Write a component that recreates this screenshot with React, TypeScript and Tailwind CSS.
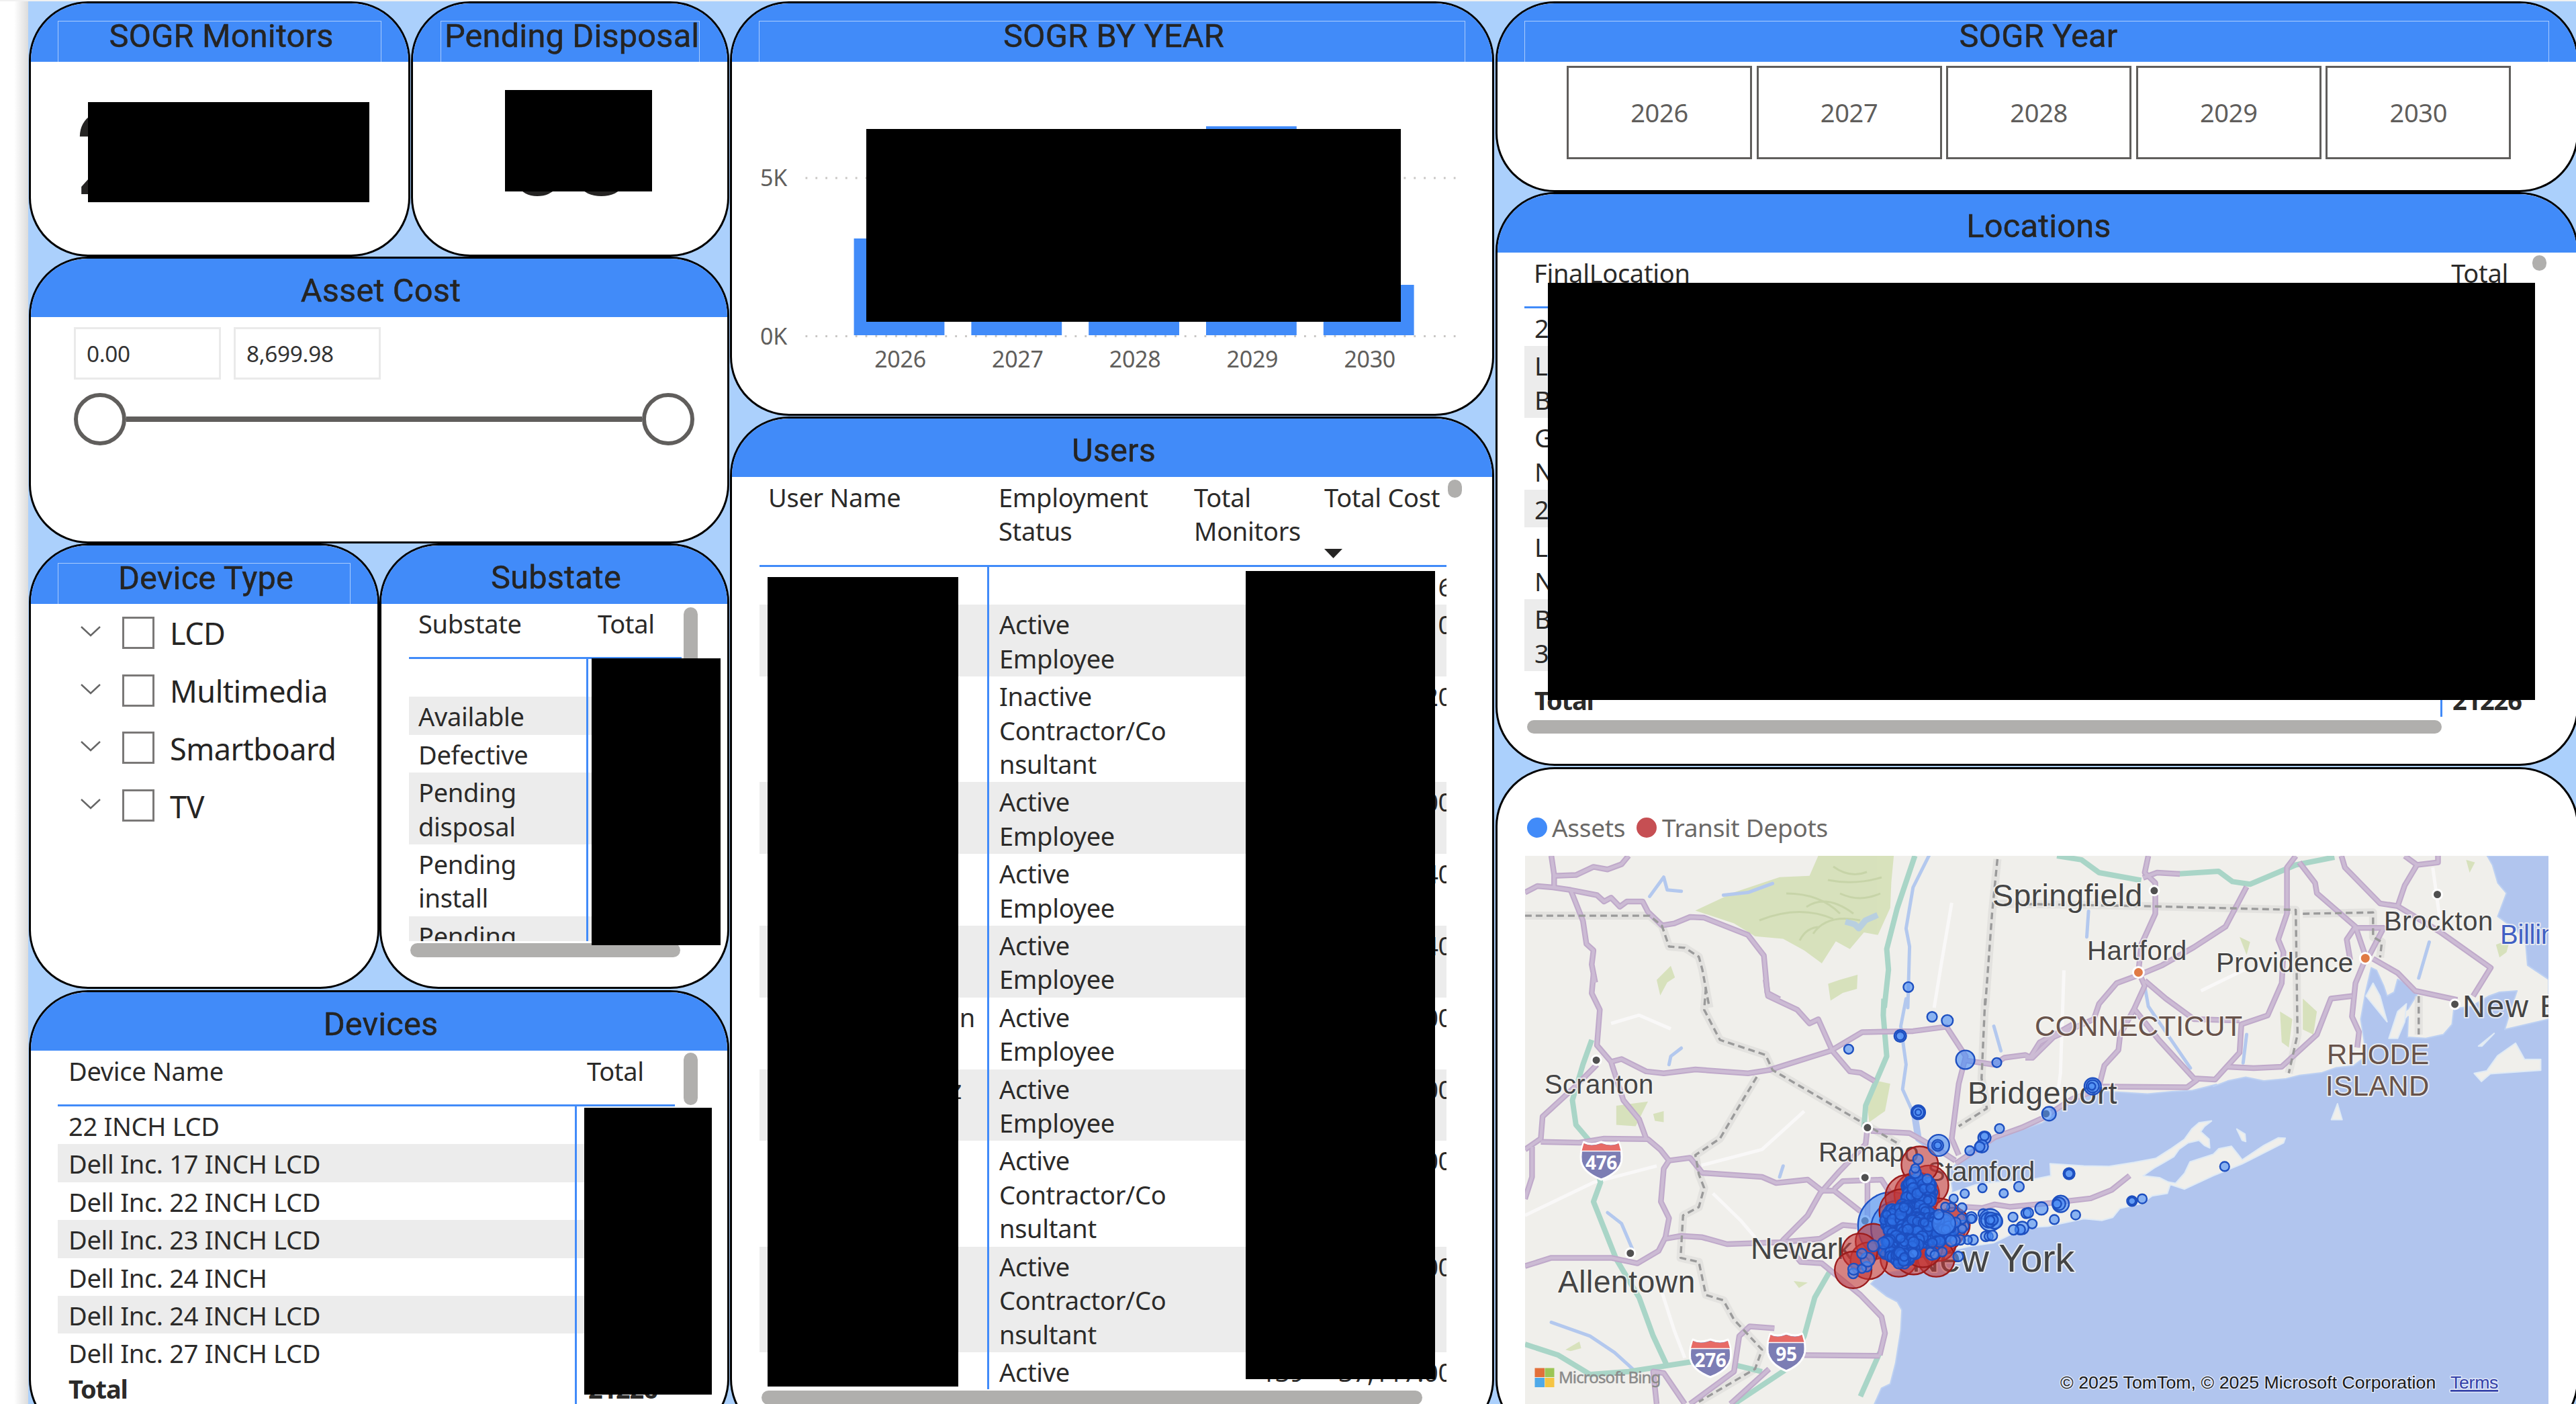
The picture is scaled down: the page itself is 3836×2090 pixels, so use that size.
import type { ReactNode } from 'react'

/* ---------- shared pieces ---------- */

function Panel({ className = '', title, outlined = false, outline = '', children }: {
  className?: string
  title?: string
  outlined?: boolean
  outline?: string
  children?: ReactNode
}) {
  return (
    <section className={`relative shrink-0 overflow-hidden rounded-[88px] border-[3px] border-black bg-white ${className}`}>
      {title && (
        <header className="h-[87px] bg-[#418bf9] pt-[26px]">
          <h2
            className={`h-[61px] whitespace-nowrap pl-[5px] text-center font-['Roboto'] text-[48.7px] leading-[44px] tracking-[0.2px] text-[#252423] [-webkit-text-stroke:0.5px_#252423] ${
              outlined ? 'border-x border-t border-white/55' : ''
            } ${outline}`}
          >
            {title}
          </h2>
        </header>
      )}
      {children}
    </section>
  )
}

function Redaction({ className }: { className: string }) {
  return <div className={`absolute bg-black ${className}`} />
}

function Thumb({ className }: { className: string }) {
  return <div className={`absolute rounded-full bg-[#b0afad] ${className}`} />
}

/* ---------- left column ---------- */

function AssetCost() {
  return (
    <Panel title="Asset Cost" className="h-[427px]">
      <div className="flex gap-[19px] pl-[64px] pt-[15px]">
        {['0.00', '8,699.98'].map((v) => (
          <div key={v} className="flex h-[78px] w-[219px] items-center border-[3px] border-[#eaeaea] pl-[16px] pt-[1px] text-[33.3px] text-[#333]">
            {v}
          </div>
        ))}
      </div>
      <div className="ml-[64px] mt-[20px] flex w-[924px] items-center">
        <div className="h-[78px] w-[78px] rounded-full border-[6px] border-[#605e5c]" />
        <div className="h-[8px] flex-1 bg-[#605e5c]" />
        <div className="h-[78px] w-[78px] rounded-full border-[6px] border-[#605e5c]" />
      </div>
    </Panel>
  )
}

function DeviceType() {
  return (
    <Panel title="Device Type" outlined outline="ml-[40px] mr-[40px]" className="w-[522px]">
      <ul>
        {['LCD', 'Multimedia', 'Smartboard', 'TV'].map((d) => (
          <li key={d} className="flex h-[85.8px] items-center pl-[74px]">
            <svg className="-mt-[4px] h-[18px] w-[30px]" viewBox="0 0 30 18" fill="none">
              <path d="M1 2 L15 15 L29 2" stroke="#666" strokeWidth="2.4" />
            </svg>
            <span className="ml-[32px] h-[48px] w-[48px] border-[3px] border-[#7a7877]" />
            <span className="ml-[23px] pt-[2px] text-[45px] tracking-[-0.5px] text-[#252423]">{d}</span>
          </li>
        ))}
      </ul>
    </Panel>
  )
}

const substates = [[''], ['Available'], ['Defective'], ['Pending', 'disposal'], ['Pending', 'install'], ['Pending']]

function Substate() {
  return (
    <Panel title="Substate" className="w-[521px]">
      <div className="ml-[41px] h-[502px] w-[406px] overflow-hidden">
        <div className="flex h-[82px] border-b-[3px] border-[#418bf9] pl-[14px] pt-[4px] leading-[50.4px]">
          <span className="w-[267px]">Substate</span>
          <span>Total</span>
        </div>
        {substates.map((lines, i) => (
          <div key={i} className={`flex ${i % 2 ? 'bg-[#ececec]' : ''}`}>
            <div className="min-h-[56.4px] w-[267px] border-r-[3px] border-[#418bf9] pb-[2px] pl-[14px] pt-[4px] leading-[50.4px]">
              {lines.map((l) => <div key={l}>{l}</div>)}
            </div>
          </div>
        ))}
      </div>
      <Thumb className="left-[450px] top-[92px] h-[120px] w-[21px]" />
      <Thumb className="left-[43px] top-[592px] h-[21px] w-[402px]" />
      <Redaction className="left-[313px] top-[168px] h-[427px] w-[192px]" />
    </Panel>
  )
}

const devices = ['22 INCH LCD', 'Dell Inc. 17 INCH LCD', 'Dell Inc. 22 INCH LCD', 'Dell Inc. 23 INCH LCD', 'Dell Inc. 24 INCH', 'Dell Inc. 24 INCH LCD', 'Dell Inc. 27 INCH LCD']

function Devices() {
  return (
    <Panel title="Devices" className="h-[667px]">
      <div className="ml-[40px]">
        <div className="flex h-[83px] w-[919px] border-b-[3px] border-[#418bf9] pl-[16px] pt-[5px] leading-[50.4px]">
          <span className="w-[772px]">Device Name</span>
          <span>Total</span>
        </div>
        {devices.map((d, i) => (
          <div key={i} className={`flex h-[56.4px] w-[919px] ${i % 2 ? 'bg-[#ececec]' : ''}`}>
            <div className="w-[773px] border-r-[3px] border-[#418bf9] pl-[16px] pt-[4px] leading-[50.4px]">{d}</div>
          </div>
        ))}
        <div className="flex h-[90px] w-[919px] font-bold tracking-[-1.2px]">
          <div className="w-[773px] border-r-[3px] border-[#418bf9] pl-[16px] leading-[50.4px]">Total</div>
          <div className="pl-[17px] leading-[50.4px]">21226</div>
        </div>
      </div>
      <Thumb className="left-[972px] top-[90px] h-[78px] w-[21px]" />
      <Redaction className="left-[824px] top-[172px] h-[427px] w-[190px]" />
    </Panel>
  )
}

/* ---------- middle column ---------- */

const bars = [
  { year: '2026', top: 355 },
  { year: '2027', top: 400 },
  { year: '2028', top: 400 },
  { year: '2029', top: 188 },
  { year: '2030', top: 424 },
]

function SogrByYear() {
  return (
    <Panel title="SOGR BY YEAR" outlined outline="mx-[40px]" className="h-[617px]">
      <svg className="absolute left-0 top-[87px] h-[524px] w-[1132px]" viewBox="1090 92 1132 524">
        {[265, 500.5].map((y) => (
          <line key={y} x1="1199.5" x2="2168" y1={y} y2={y} stroke="#c8c6c4" strokeWidth="3" strokeDasharray="2.8 12.05" />
        ))}
        {bars.map((b, i) => (
          <rect key={b.year} x={1271.6 + i * 174.8} y={b.top} width="134.8" height={499 - b.top} fill="#418bf9" />
        ))}
        <g fill="#605e5c" fontSize="34" fontFamily="Noto Sans, sans-serif" letterSpacing="-0.3">
          <text x="1172" y="277" textAnchor="end">5K</text>
          <text x="1172" y="512.5" textAnchor="end">0K</text>
          {bars.map((b, i) => (
            <text key={b.year} x={1340.5 + i * 174.8} y="547" textAnchor="middle">{b.year}</text>
          ))}
        </g>
      </svg>
      <Redaction className="left-[200px] top-[187px] h-[287px] w-[796px]" />
    </Panel>
  )
}

type User = { name?: string; pad?: string; status: string[]; count?: string; cost: string }
const contractor = ['Active', 'Contractor/Co', 'nsultant']
const employee = ['Active', 'Employee']
const users: User[] = [
  { status: [''], cost: '6' },
  { status: employee, cost: '0' },
  { status: ['Inactive', 'Contractor/Co', 'nsultant'], cost: '20' },
  { status: employee, cost: '00' },
  { status: employee, cost: '40' },
  { status: employee, cost: '40' },
  { name: 'n', pad: 'pr-[18px]', status: employee, cost: '00' },
  { name: 'z', pad: 'pr-[38px]', status: employee, cost: '00' },
  { status: contractor, cost: '00' },
  { status: contractor, cost: '00' },
  { status: ['Active', ''], count: '139', cost: '37,117.00' },
]

function Users() {
  return (
    <Panel title="Users" className="h-[1521px]">
      <div className="ml-[41px] h-[1358px] w-[1023px] overflow-hidden leading-[50.4px]">
        <div className="flex h-[134px] border-b-[3px] border-[#418bf9] pt-[5px]">
          <div className="w-[342px] pl-[13px]">User Name</div>
          <div className="w-[291px] pl-[14px]">Employment<br />Status</div>
          <div className="w-[194px] pl-[14px]">Total<br />Monitors</div>
          <div className="w-[196px] whitespace-nowrap pl-[14px]">
            Total Cost
            <svg className="mt-[52px] h-[14px] w-[27px]" viewBox="0 0 27 14"><path d="M0 0H27L13.5 14Z" fill="#252423" /></svg>
          </div>
        </div>
        {users.map((u, i) => (
          <div key={i} className={`flex ${i % 2 ? 'bg-[#ececec]' : ''}`}>
            <div className={`w-[342px] border-r-[3px] border-[#418bf9] pt-[4px] text-right ${u.pad ?? ''}`}>{u.name}</div>
            <div className="min-h-[56.4px] w-[291px] pb-[2px] pl-[15px] pt-[4px]">
              {u.status.map((l) => <div key={l}>{l}</div>)}
            </div>
            <div className="w-[194px] pr-[16px] pt-[4px] text-right">{u.count}</div>
            <div className="flex w-[196px] justify-end overflow-hidden pt-[4px]">
              <span className="-mr-[9px]">{u.cost}</span>
            </div>
          </div>
        ))}
      </div>
      <Thumb className="left-[1066px] top-[91px] h-[27px] w-[21px]" />
      <Thumb className="left-[44px] top-[1447px] h-[21px] w-[984px]" />
      <Redaction className="left-[53px] top-[236px] h-[1205px] w-[284px]" />
      <Redaction className="left-[765px] top-[227px] h-[1203px] w-[282px]" />
    </Panel>
  )
}

/* ---------- right column ---------- */

function SogrYear() {
  return (
    <Panel title="SOGR Year" outlined outline="ml-[40px] mr-[41px]" className="h-[284px]">
      <div className="flex gap-[6.6px] pl-[103px] pt-[6px]">
        {['2026', '2027', '2028', '2029', '2030'].map((y) => (
          <div key={y} className="flex h-[139px] w-[276px] items-center justify-center border-[3px] border-[#605e5c] text-[#605e5c]">
            {y}
          </div>
        ))}
      </div>
    </Panel>
  )
}

const locations = [['2'], ['L', 'B'], ['G', 'N'], ['2'], ['L', 'N'], ['B', '3']]

function Locations() {
  return (
    <Panel title="Locations" className="h-[854px]">
      <div className="ml-[40px] leading-[50.4px]">
        <div className="flex h-[83px] w-[1490px] justify-between border-b-[3px] border-[#418bf9] pl-[14px] pr-[25px] pt-[5px]">
          <span>FinalLocation</span>
          <span>Total</span>
        </div>
        {locations.map((lines, i) => (
          <div key={i} className={`w-[60px] pb-[2px] pl-[15px] pt-[4px] ${i % 2 ? 'bg-[#ececec]' : ''}`}>
            {lines.map((l) => <div key={l}>{l}</div>)}
          </div>
        ))}
        <div className="flex h-[68px] w-[1490px] pt-[18px] font-bold tracking-[-1.2px]">
          <div className="w-[1367px] border-r-[3px] border-[#418bf9] pl-[15px]">Total</div>
          <div className="pl-[15px]">21226</div>
        </div>
      </div>
      <Thumb className="left-[1541px] top-[91px] h-[23px] w-[21px]" />
      <Thumb className="left-[44px] top-[783px] h-[20px] w-[1362px]" />
      <Redaction className="left-[75px] top-[132px] h-[621px] w-[1470px]" />
    </Panel>
  )
}

/* Survey sheets: every outline is noted in the units of its own sheet
   (origin x, origin y, units per pixel in x and y). */
type Sheet = [number, number, number, number]
const NW: Sheet = [2216, 900, 1.912, 2.613]
const NE: Sheet = [3016, 1100, 1.912, 2.613]
const SW: Sheet = [2216, 1450, 1.912, 2.45]
const NYC: Sheet = [2640, 1400, 2.24, 2.8]
const SE: Sheet = [2996, 1500, 1.8667, 2.6576]

function pt(s: Sheet, x: number, y: number): [number, number] {
  return [+(s[0] + x / s[2]).toFixed(1), +(s[1] + y / s[3]).toFixed(1)]
}
function line(s: Sheet, pts: string) {
  return pts.split(' ').map((p) => {
    const [x, y] = p.split(',').map(Number)
    return pt(s, x, y).join(',')
  }).join(' ')
}

const sea = [
  line(SW, '1100,1568 1120,1510 1145,1495 1160,1420 1175,1300 1178,1225 1165,1195 1135,1175 1090,1130 1115,1095 1180,1080 1250,1060'),
  line(NYC, '600,1240 590,1100 600,1040 590,960 620,920 650,880 700,840 760,805 830,790 900,760 960,705 1010,665 1060,628 1150,632 1250,640 1330,630 1400,625 1480,600'),
  line(SE, '560,312 600,290 650,275 700,290 760,282 800,268 860,258 900,238 950,230 985,190 978,120'),
  line(NE, '955,1090 968,990 985,890 1000,900 1020,960 1030,1000 1050,985 1060,935 1085,950 1115,995 1090,1050 1060,1080 1040,1160 1090,1080 1088,1160 1140,1165 1190,1150 1215,1110 1220,1050 1270,1040 1320,1000 1350,985 1400,980 1385,1040 1365,1130 1490,1090 1490,935 1430,880 1425,800 1400,745 1345,690 1370,600 1345,560 1330,490 1315,455'),
  '3796,1274 3796,2092 2800,2092',
].join(' ')

const islands = [
  line(SE, '-231,949 -260,860 -230,760 -164,731 -100,700 -40,690 44,683 108,665 106,617 200,626 270,628 340,612 400,596 440,560 480,520 500,480 520,455 555,448 535,470 525,490 548,520 550,555 535,545 520,525 490,535 465,560 450,590 420,615 395,635 365,665 410,672 435,690 455,695 480,655 495,610 560,580 575,558 610,548 628,580 640,602 700,545 740,515 760,516 755,535 700,575 640,618 560,665 480,718 440,700 432,735 390,745 360,775 300,795 280,830 250,842 200,835 100,865 40,870 0,895 -50,930 -120,945 -198,968'),
  line(SE, '625,480 648,500 650,530 640,525'),
  line(SE, '905,380 918,443 888,443'),
  line(SE, '1285,260 1320,250 1350,190 1400,140 1425,205 1470,205 1470,248 1330,262 1305,292'),
  line(NE, '1060,1060 1085,1030 1080,1100 1060,1165 1035,1165'),
  line(NE, '990,950 1010,1000 1030,1100 1000,1050 970,1000'),
  line(NE, '1290,1195 1335,1145 1300,1195'),
]

const greens = [
  line(NW, '940,977 1155,977 1148,1080 1145,1180 1110,1285 1070,1275 1030,1340 990,1310 950,1395 900,1345 840,1300 760,1290 700,1240 590,1190 700,1120 830,1060 915,1055'),
  line(NW, '975,1540 968,1475 1000,1460 1052,1440 1050,1495 1010,1510'),
  line(NW, '490,1520 480,1460 520,1405 532,1450 510,1470'),
  line(SW, '1110,390 1145,400 1130,500 1085,540 1080,490'),
  line(SW, '365,480 455,465 420,555 365,550'),
  line(SW, '470,510 500,500 500,540 475,535'),
  line(SW, '220,1370 260,1340 265,1365 235,1375'),
  line(SW, '870,1120 910,1125 885,1145'),
  line(NE, '790,1010 830,1060 820,1150 790,1130'),
  line(NE, '1255,470 1280,480 1265,520'),
  line(NE, '1340,800 1380,780 1370,830 1350,850'),
  line(NE, '725,1060 760,1090 750,1200 730,1180'),
  line(NE, '610,770 640,790 630,840'),
]

const motorways = [
  line(NW, '180,977 188,1050 188,1100'),
  line(NW, '105,1120 140,1095 185,1100 235,1110 310,1130 330,1155 350,1140 375,1175 395,1155 440,1155 455,1195 495,1248 530,1240 575,1215 615,1218 740,1285 785,1365 795,1510 830,1535'),
  line(NW, '190,1055 250,1052 300,1020 340,1030 380,1010 400,977'),
  line(NW, '235,1110 270,1230 280,1320 300,1345 295,1400 305,1470'),
  line(SW, '300,0 295,70 318,130 310,260 350,320 385,460 430,530 450,600'),
  line(SW, '310,330 240,420 155,520 150,600 105,640'),
  line(SW, '350,320 380,310 450,355 500,362 590,348 740,362 800,350 975,280 1065,212 1210,208 1305,192 1360,300 1340,400 1320,600 1340,660'),
  line(SW, '790,20 797,80 880,130 915,180 940,165 980,280 1030,355 1060,360 1100,390'),
  line(SW, '150,612 260,615 330,600 455,602 490,640 515,680 575,670 610,725 780,740 820,762 910,750 950,790 985,790 1060,865'),
  line(SW, '515,680 500,710 492,830 515,890 505,960 485,1010 425,1055 350,1035 180,1035 105,1065'),
  line(SW, '505,965 550,955 610,960 680,985 830,978 945,965 1010,915 1050,920'),
  line(SW, '1080,560 1075,620 1000,720 945,800 910,880 840,970 890,1050 950,1055 1060,1170 1120,1250 1130,1310 1115,1390'),
  line(SW, '985,785 1010,755 1120,750 1160,830'),
  line(SW, '1080,760 1080,900'),
  line(SW, '105,820 125,740 125,630'),
  line(SW, '575,1568 700,1450 715,1320 745,1285 815,1292'),
  line(SW, '900,1390 1115,1392'),
  line(SW, '480,1568 470,1450 500,1455 560,1568'),
  line(SW, '690,1568 800,1440'),
  line(SW, '1090,572 1200,580 1270,630 1330,680'),
  line(SW, '1360,315 1440,330 1470,305 1530,295 1545,305'),
  line(NYC, '860,485 890,425 950,385 1000,350'),
  line(NE, '350,455 340,520 370,560 370,680 330,800 322,905 340,960 310,1050 270,1150 265,1210 225,1270 210,1350'),
  line(NE, '335,540 375,520 440,525'),
  line(NE, '630,575 570,730 480,810 390,880 320,920 260,950 210,1030 195,1090 80,1160 20,1240 0,1240'),
  line(NE, '340,940 400,1010 480,1090 610,1095'),
  line(NE, '310,1050 380,1170 480,1320 540,1325 610,1220 615,1110 690,1075 730,950 735,830 720,780 745,680 745,500 770,455'),
  line(NE, '220,1352 460,1355 490,1325'),
  line(NE, '575,1275 650,1280 730,1275 830,1150 870,1010 930,1000'),
  line(NE, '780,480 825,560 830,600 940,730 970,850 940,950 930,1080 950,1140 945,1200'),
  line(NE, '900,455 910,500 1010,640 1060,650 1080,570 1115,490 1175,480 1175,455'),
  line(NE, '1080,455 1115,490'),
  line(NE, '1060,650 1180,750 1325,890 1275,1000'),
  line(NE, '940,735 1020,735 980,840'),
  line(NE, '940,730 915,780 925,860'),
  line(NE, '990,855 1060,910 1110,980 1230,1015'),
  line(NYC, '610,930 740,820 830,780 900,740 1000,660 1100,615'),
  line(NYC, '640,1110 700,1115 740,1100 790,1110 920,1095 1060,1075 1130,1040 1190,980'),
]

const turnpikes = [
  line(NW, '1215,977 1165,1180 1135,1340 1140,1420 1128,1568'),
  line(SW, '1127,90 1125,150 1135,300 1075,480 1070,560'),
  line(SW, '295,240 270,330 240,460 250,550 290,610 320,760 300,830 365,1040 430,1180 470,1320 510,1430'),
  line(SW, '105,1350 200,1390 290,1460 400,1450 600,1410'),
  line(SW, '975,1080 930,1180 900,1320 850,1440 700,1568'),
  line(SW, '1115,1380 1060,1540'),
  line(SW, '700,1425 780,1450'),
  line(NE, '90,455 160,470 210,520 330,550'),
  line(NE, '430,525 550,515 590,555 640,565 770,490 880,460'),
]

const rivers = [
  line(NW, '1255,977 1210,1100 1190,1260 1200,1330 1195,1568'),
  line(SW, '1190,90 1175,190 1190,330 1180,420 1215,520'),
  line(NW, '460,1135 500,1060 510,1110 550,1115'),
  line(NW, '670,1130 740,1120 810,1085'),
  line(NE, '340,960 350,1040 400,1140 470,1280'),
  line(NE, '1150,790 1120,930'),
  line(NE, '180,670 175,770'),
  line(NE, '630,1150 620,1260'),
  line(SW, '340,870 380,910 410,1000'),
  line(SW, '180,1270 290,1320 360,1380 420,1450'),
  line(SW, '1440,190 1460,280'),
  line(SW, '515,330 520,300 550,270'),
  line(SW, '830,740 840,700'),
]

const borders = [
  line(NW, '105,1210 460,1210 495,1250 515,1330 560,1335 600,1370 610,1420 630,1568'),
  line(NW, '1450,990 1435,1200 1415,1568'),
  line(SW, '620,50 615,130 660,240 790,295 810,350 1170,620'),
  line(SW, '765,375 720,470 660,600 590,660 600,730 615,780 600,850 555,880 548,1035 600,1050 620,1170 670,1190 700,1260 780,1370 760,1440 600,1560'),
  line(SW, '1415,90 1405,380 1420,490 1340,555'),
  line(NE, '-90,640 330,650 390,652 770,665 775,1150 750,1300'),
  line(NE, '790,680 990,675 990,770 1015,790 1010,850'),
  line(NE, '1120,1000 1120,1150'),
]

const lanes = [
  line(NW, '1320,1160 1290,1400 1270,1568'),
  line(NE, '110,900 100,1300 90,1400'),
  line(SW, '900,500 780,640 600,700'),
  line(SW, '105,880 300,760 480,700'),
  line(NE, '500,980 620,900 700,890'),
  line(SW, '480,1100 530,1300 560,1400'),
  line(SW, '350,180 430,150 520,200'),
  line(SW, '640,800 720,900 760,960'),
  line(NE, '1160,500 1180,700'),
]

type Dot = [number, number, number]
const depots: Dot[] = [
  [480, 1060, 34], [520, 1020, 30], [490, 935, 28], [450, 1070, 34], [430, 1130, 34], [470, 1200, 45], [550, 1190, 42], [600, 1185, 26],
  [550, 1260, 28], [545, 1325, 28], [420, 1325, 28], [470, 1310, 30], [500, 1280, 30], [335, 1255, 27], [320, 1335, 28], [290, 1295, 27], [268, 1373, 28],
]
const sites: Dot[] = [
  [452, 194, 8], [531, 318, 8], [582, 334, 9], [425, 398, 9.5], [425, 398, 7], [253, 453, 7.5], [642, 497, 14.5], [747, 509, 7.5],
  [1067, 608, 13], [1067, 608, 10], [1064, 608, 6], [921, 722, 11], [485, 716, 11], [485, 716, 9], [485, 716, 5], [756, 784, 7.5], [706, 822, 10],
  [706, 816, 7], [697, 858, 10], [690, 860, 8], [657, 876, 7.5], [553, 854, 16.5], [550, 854, 9], [550, 854, 6], [699, 1032, 7], [640, 1055, 7],
  [770, 1054, 7], [821, 1026, 8], [988, 972, 9], [988, 972, 7], [1507, 942, 7.5], [603, 1076, 7], [631, 1114, 7.5], [595, 1112, 7], [575, 1110, 7],
  [662, 1155, 9], [662, 1160, 7], [702, 1140, 8], [725, 1165, 17], [740, 1170, 12], [720, 1165, 12], [728, 1160, 10], [725, 1175, 8], [735, 1165, 8], [725, 1165, 7], [801, 1153, 7.5],
  [845, 1137, 8], [852, 1135, 8], [896, 1117, 10], [960, 1098, 13], [955, 1098, 10], [948, 1098, 7], [1010, 1144, 7.5], [939, 1163, 7.5],
  [865, 1181, 7.5], [832, 1198, 10], [825, 1205, 8], [803, 1206, 8], [710, 1233, 8], [720, 1233, 7], [732, 1230, 8], [1198, 1086, 8], [1198, 1086, 6],
  [1232, 1077, 7.5], [618, 1317, 8], [565, 1298, 7.5], [530, 1305, 10], [525, 1298, 7], [540, 1310, 7], [668, 1248, 8], [650, 1248, 7], [625, 1248, 8],
  [608, 1250, 8], [595, 1252, 9], [268, 1388, 8], [270, 1370, 9], [313, 1360, 8], [297, 1368, 7], [316, 1330, 11], [297, 1305, 8],
  [335, 1273, 9], [468, 1305, 8], [484, 912, 8], [475, 967, 9], [475, 950, 7], [515, 995, 8], [635, 1190, 9], [630, 1160, 8], [632, 1202, 7],
  [610, 1175, 8], [570, 1180, 18], [553, 1142, 8],
]

/* Dense downtown markers: centre x, centre y, spread x, spread y, count. */
const clusters = [
  [488, 1050, 48, 62, 110],
  [455, 1170, 85, 72, 240],
  [515, 1205, 88, 58, 170],
  [425, 1280, 65, 48, 80],
  [428, 1325, 28, 26, 30],
]
function scatter(): Dot[] {
  let seed = 7
  const rnd = () => (seed = (seed * 16807) % 2147483647) / 2147483647
  return clusters.flatMap(([cx, cy, sx, sy, n]) =>
    Array.from({ length: n }, (): Dot => {
      const a = rnd() * Math.PI * 2
      const r = Math.sqrt(rnd())
      return [cx + Math.cos(a) * r * sx, cy + Math.sin(a) * r * sy, 6.6 + rnd() * 2.8]
    }),
  )
}

function Bubbles({ dots, fill, stroke, opacity }: { dots: Dot[]; fill: string; stroke: string; opacity: number }) {
  return (
    <g fill={fill} fillOpacity={opacity} stroke={stroke} strokeWidth="2.4">
      {dots.map(([x, y, r], i) => {
        const [cx, cy] = pt(NYC, x, y)
        return <circle key={i} cx={cx} cy={cy} r={r - 0.6} />
      })}
    </g>
  )
}

function Shield({ x, y, label, w = 62 }: { x: number; y: number; label: string; w?: number }) {
  const h = w / 2
  return (
    <g transform={`translate(${x} ${y})`}>
      <path d={`M${-h + 5} -27 Q${-h / 2} -21 0 -27 Q${h / 2} -21 ${h - 5} -27 Q${h + 1} -12 ${h - 1} 2 Q${h - 5} 19 0 29 Q${-h + 5} 19 ${-h + 1} 2 Q${-h - 1} -12 ${-h + 5} -27Z`} fill="#7c7db4" stroke="#fff" strokeWidth="3" />
      <path d={`M${-h + 5} -25 Q${-h / 2} -19 0 -25 Q${h / 2} -19 ${h - 5} -25 L${h - 2} -14 H${-h + 2}Z`} fill="#e76b67" />
      <path d={`M${-h + 1} -13.5 H${h - 1}`} stroke="#fff" strokeWidth="1.6" />
      <text x="0" y="14" textAnchor="middle" fontFamily="Noto Sans, sans-serif" fontWeight="700" fontSize="28" fill="#fff" stroke="none">{label}</text>
    </g>
  )
}

const towns: [string, number, number, number, number][] = [
  ['Springfield', 2967, 1349, 46.5, 223],
  ['Brockton', 3550, 1384.5, 40, 162],
  ['Hartford', 3108, 1428.5, 40, 148],
  ['Providence', 3300, 1446.5, 40.5, 204],
  ['New B', 3667, 1514, 47, 146],
  ['Bridgeport', 2930, 1642.5, 46.5, 222],
  ['Scranton', 2300, 1627.5, 40, 162],
  ['Allentown', 2320, 1924, 46, 204],
  ['Newark', 2607, 1874, 45, 0],
  ['Ramapo', 2708, 1728.5, 40, 0],
  ['Stamford', 2870, 1757.5, 40, 160],
]

function MapCanvas() {
  const dark = [pt(SW, 308, 314), pt(SW, 1080, 560), pt(SW, 1073, 742), pt(SW, 405, 1018), pt(SW, 1073, 900), pt(NE, 367, 590), pt(NE, 1173, 605), pt(NE, 1223, 1032), pt(NYC, 911, 722)]
  const capitals = [pt(NE, 322, 908), pt(NE, 968, 853)]
  return (
    <svg className="block h-[816px] w-[1524px]" viewBox="2271 1274 1524 816" strokeLinejoin="round" fill="none">
      <rect x="2271" y="1274" width="1524" height="816" fill="#f0efeb" />
      <g stroke="#f9f8f8" strokeWidth="5">{lanes.map((p, i) => <polyline key={i} points={p} />)}</g>
      <g fill="#d3dfb4" opacity="0.85">{greens.map((p, i) => <polygon key={i} points={p} />)}</g>
      <g stroke="#bccb9b" strokeWidth="3" opacity="0.6">
        <path d="M2730 1290 q25 18 50 8 M2722 1310 q40 8 80 -4 M2660 1330 q50 0 80 30 M2690 1350 q30 -20 70 10 M2620 1370 q60 -24 110 -2 M2700 1390 q20 -30 70 -20 M2680 1400 q10 -20 30 -20 M2740 1330 q30 14 60 0" />
      </g>
      <g stroke="#b3c8ee" strokeWidth="5" strokeLinecap="round">{rivers.map((p, i) => <polyline key={i} points={p} />)}</g>
      <polygon points={sea} fill="#b1c5ee" stroke="#bcd0f2" strokeWidth="2" />
      <g fill="#f0efeb" stroke="#dfeaf5" strokeWidth="2">{islands.map((p, i) => <polygon key={i} points={p} />)}</g>
      <polyline points={line(SW, '1215,520 1225,600 1270,640')} stroke="#b1c5ee" strokeWidth="10" />
      <polyline points="2748,1372 2762,1376 2768,1382 2778,1370 2796,1362" stroke="#b8cfe0" strokeWidth="9" />
      <g stroke="#dcdbd8" strokeWidth="12" opacity="0.6">{borders.map((p, i) => <polyline key={i} points={p} />)}</g>
      <g stroke="#a9d5c7" strokeWidth="8">{turnpikes.map((p, i) => <polyline key={i} points={p} />)}</g>
      <g stroke="#bfa9ca" strokeWidth="8.5">{motorways.map((p, i) => <polyline key={i} points={p} />)}</g>
      <g stroke="#ccbbd4" strokeWidth="4.5">{motorways.map((p, i) => <polyline key={i} points={p} />)}</g>
      <g stroke="#9a9a9a" strokeWidth="3.4" strokeDasharray="10 6">{borders.map((p, i) => <polyline key={i} points={p} />)}</g>
      <g fill="#505050" stroke="#fff" strokeWidth="3">{dark.map(([x, y], i) => <circle key={i} cx={x} cy={y} r="7" />)}</g>
      <g fill="#e07b45" stroke="#fff" strokeWidth="3">{capitals.map(([x, y], i) => <circle key={i} cx={x} cy={y} r="8" />)}</g>

      <Shield x={2384.5} y={1727} label="476" />
      <Shield x={2547} y={2021} label="276" />
      <Shield x={2660} y={2012} label="95" w={57} />

      <g fontFamily="Liberation Sans, sans-serif" fill="#444" stroke="#f6f5f2" strokeOpacity="0.75" strokeWidth="4" paintOrder="stroke">
        {towns.map(([t, x, y, s, w]) => <text key={t} x={x} y={y} fontSize={s} {...(w ? { textLength: w } : {})}>{t}</text>)}
        <text x="3089" y="1893" fontSize="58" textAnchor="end">New York</text>
        <g fill="#67524a">
          <text x="3030" y="1541.5" fontSize="42.5" textLength="309">CONNECTICUT</text>
          <text x="3465" y="1583.5" fontSize="42" textLength="152">RHODE</text>
          <text x="3463" y="1631" fontSize="42" textLength="154">ISLAND</text>
        </g>
        <text x="3723" y="1404.5" fontSize="40" fill="#4160c4">Billin</text>
      </g>

      <Bubbles dots={[[397, 1190, 51], [420, 1200, 42]]} fill="#5b9af5" stroke="#1d52c4" opacity={0.7} />
      <Bubbles dots={depots} fill="#c23636" stroke="#9c1c1c" opacity={0.58} />
      <Bubbles dots={scatter()} fill="#2f72e6" stroke="#1d4fc0" opacity={0.6} />
      <Bubbles dots={sites} fill="#4a8df5" stroke="#1d4fc0" opacity={0.62} />

      <g>
        <rect x="2285.5" y="2036.5" width="14.5" height="13.5" fill="#e2703a" />
        <rect x="2300.5" y="2036.5" width="14" height="13.5" fill="#9cc556" />
        <rect x="2285.5" y="2051" width="14.5" height="14" fill="#4fa9e8" />
        <rect x="2300.5" y="2051" width="14" height="14" fill="#f5c443" />
        <text x="2321" y="2059" fontFamily="Noto Sans, sans-serif" fontSize="24" textLength="152" fill="#8a8a8a" stroke="#8a8a8a" strokeWidth="0.5">Microsoft Bing</text>
      </g>
      <g fontFamily="Liberation Sans, sans-serif" fontSize="26.7" stroke="#fff" strokeOpacity="0.6" strokeWidth="3" paintOrder="stroke">
        <text x="3068" y="2067" fill="#1a1a1a" textLength="559">© 2025 TomTom, © 2025 Microsoft Corporation</text>
        <text x="3649" y="2067" fill="#3340a8" textDecoration="underline">Terms</text>
      </g>
    </svg>
  )
}

function AssetMap() {
  return (
    <Panel className="h-[1000px]">
      <div className="flex items-center pl-[44px] pt-[61px] text-[37px] leading-[52px] tracking-[-0.3px] text-[#6b6967]">
        <span className="h-[30px] w-[30px] rounded-full bg-[#418bf9]" />
        <span className="ml-[7px] w-[126px]">Assets</span>
        <span className="h-[30px] w-[30px] rounded-full bg-[#c64f53]" />
        <span className="ml-[8px]">Transit Depots</span>
      </div>
      <div className="ml-[41px] mt-[16px]">
        <MapCanvas />
      </div>
    </Panel>
  )
}

export default function App() {
  return (
    <div className="flex h-[2090px] w-full flex-col overflow-hidden bg-white font-['Noto_Sans',sans-serif] text-[38px] tracking-[-0.3px] text-[#2b2a29]">
      <div className="h-[2px] shrink-0 bg-[#f1f1f1]" />
      <div className="flex min-h-0 flex-1">
        <aside className="w-[42px] shrink-0 bg-linear-to-r from-white from-50% to-[#dcdcdc]" />
        <main className="flex min-w-0 flex-1 overflow-hidden bg-[#abd0fc] pl-[1px]">
          <div className="flex w-[1043px] shrink-0 flex-col">
            <div className="flex shrink-0 gap-[1px]">
              <Panel title="SOGR Monitors" outlined outline="mx-[40px]" className="h-[380px] w-[568px]">
                <div className="pl-[65px] pt-[39px] font-['Roboto'] text-[171px] leading-[200px] text-[#252423]">2</div>
                <Redaction className="left-[85px] top-[147px] h-[149px] w-[419px]" />
              </Panel>
              <Panel title="Pending Disposal" outlined outline="mx-[41px]" className="h-[380px] w-[474px]">
                <div className="pl-[134px] pt-[39px] font-['Roboto'] text-[174px] leading-[200px] text-[#252423]">68</div>
                <Redaction className="left-[137px] top-[129px] h-[151px] w-[219px]" />
              </Panel>
            </div>
            <AssetCost />
            <div className="mb-[2px] flex h-[663px] shrink-0">
              <DeviceType />
              <Substate />
            </div>
            <Devices />
          </div>
          <div className="ml-[1px] flex w-[1138px] shrink-0 flex-col gap-[1px]">
            <SogrByYear />
            <Users />
          </div>
          <div className="ml-[2px] flex w-[1613px] shrink-0 flex-col">
            <SogrYear />
            <Locations />
            <div className="mt-[2px]">
              <AssetMap />
            </div>
          </div>
        </main>
      </div>
    </div>
  )
}
